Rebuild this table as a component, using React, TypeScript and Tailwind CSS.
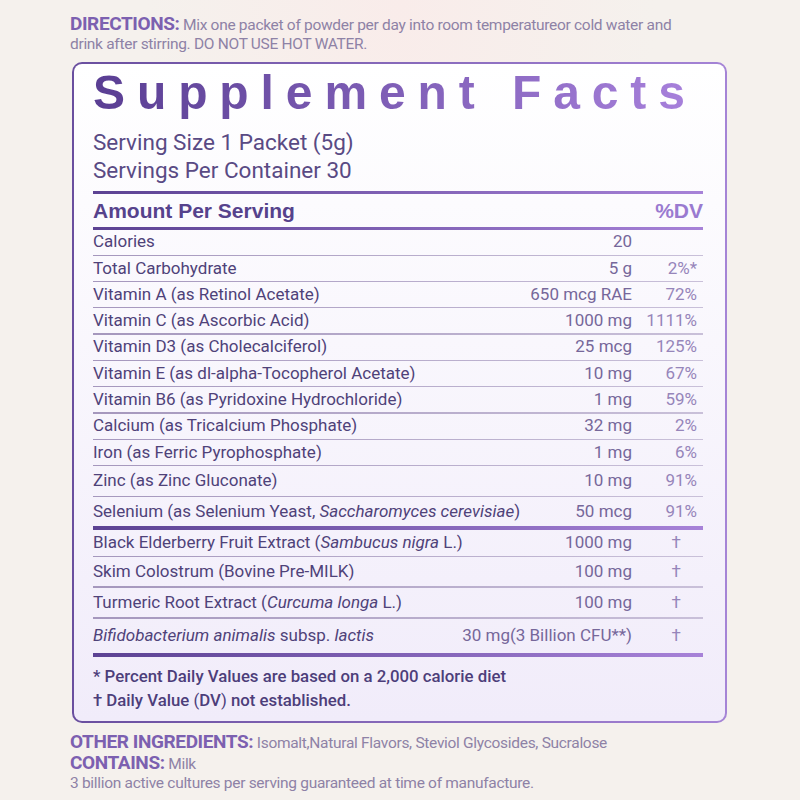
import React from "react";

type Row = { name: React.ReactNode; amt: React.ReactNode; dv: string; h: string };

const SMALL = "font-['Roboto',sans-serif] text-[15.5px] tracking-[-0.3px]";
const HEAD = "inline-block leading-[19px] font-bold text-[19px] tracking-[-0.4px] text-[#7c60b0]";

const rows1: Row[] = [
  { name: "Calories", amt: "20", dv: "", h: "h-[25px]" },
  { name: "Total Carbohydrate", amt: "5 g", dv: "2%*", h: "h-[25px]" },
  { name: "Vitamin A (as Retinol Acetate)", amt: "650 mcg RAE", dv: "72%", h: "h-[25px]" },
  { name: "Vitamin C (as Ascorbic Acid)", amt: "1000 mg", dv: "1111%", h: "h-[25px]" },
  { name: "Vitamin D3 (as Cholecalciferol)", amt: "25 mcg", dv: "125%", h: "h-[25px]" },
  { name: "Vitamin E (as dl-alpha-Tocopherol Acetate)", amt: "10 mg", dv: "67%", h: "h-[25px]" },
  { name: "Vitamin B6 (as Pyridoxine Hydrochloride)", amt: "1 mg", dv: "59%", h: "h-[25px]" },
  { name: "Calcium (as Tricalcium Phosphate)", amt: "32 mg", dv: "2%", h: "h-[25px]" },
  { name: "Iron (as Ferric Pyrophosphate)", amt: "1 mg", dv: "6%", h: "h-[25px]" },
  { name: "Zinc (as Zinc Gluconate)", amt: "10 mg", dv: "91%", h: "h-[29.5px]" },
];

const rows2: Row[] = [
  {
    name: (
      <>
        Black Elderberry Fruit Extract (<i>Sambucus nigra</i> L.)
      </>
    ),
    amt: "1000 mg",
    dv: "†",
    h: "h-[26px]",
  },
  { name: "Skim Colostrum (Bovine Pre-MILK)", amt: "100 mg", dv: "†", h: "h-[29.5px]" },
  {
    name: (
      <>
        Turmeric Root Extract (<i>Curcuma longa</i> L.)
      </>
    ),
    amt: "100 mg",
    dv: "†",
    h: "h-[29.7px]",
  },
];

function Thin() {
  return <div className="h-[1.3px] bg-linear-to-r from-[#a597bd] to-[#c9c0d9]" />;
}

function Thick({ h }: { h: string }) {
  return <div className={`${h} bg-linear-to-r from-[#5c4293] to-[#a782d8]`} />;
}

function RowView({ r }: { r: Row }) {
  return (
    <div className={`flex items-center ${r.h}`}>
      <div className="flex-1 text-[#4f4279]">{r.name}</div>
      <div className="text-right text-[#76679a]">{r.amt}</div>
      <div className={`w-[71px] text-right text-[#9685ba] ${r.dv === "†" ? "pr-[22px]" : "pr-[6px]"}`}>{r.dv}</div>
    </div>
  );
}

export default function App() {
  return (
    <div className="w-[800px] h-[800px] overflow-hidden bg-[#f5f1ed] bg-[radial-gradient(ellipse_at_50%_0%,#f9ecea_0%,transparent_45%)] pl-[70px] pt-[14px]">
      <div className={`${SMALL} leading-[19px] text-[#8e82a6]`}>
        <div>
          <span className={HEAD}>DIRECTIONS:</span> Mix one packet of powder per day into room temperatureor cold
          water and
        </div>
        <div>drink after stirring. DO NOT USE HOT WATER.</div>
      </div>

      <div className="mt-[8px] ml-[2px] w-[655px] h-[661px] rounded-[10px] p-[2px] bg-linear-to-r from-[#6a4f9f] to-[#a584d6]">
        <div className="h-full rounded-[8px] bg-linear-to-b from-[#ffffff] to-[#f1ecfa] pl-[19px] pr-[22px] pt-[5px] font-['Roboto',sans-serif]">
          <div className="h-[48px] leading-[48px] text-[48px] font-bold tracking-[11.9px] font-['Liberation_Sans',Arial,sans-serif] whitespace-nowrap">
            <span className="bg-linear-to-r from-[#5a3e93] to-[#a881dc] bg-clip-text text-transparent">
              Supplement Facts
            </span>
          </div>

          <div className="mt-[11px] text-[22.5px] leading-[28px] text-[#594a84]">
            <div>Serving Size 1 Packet (5g)</div>
            <div>Servings Per Container 30</div>
          </div>

          <div className="mt-[7px]">
            <Thick h="h-[3px]" />
          </div>

          <div className="flex h-[33px] items-center font-['Liberation_Sans',Arial,sans-serif] text-[21px] font-bold">
            <div className="flex-1 text-[#56428c]">Amount Per Serving</div>
            <div className="text-[#9a7ad0]">%DV</div>
          </div>
          <Thick h="h-[2.5px]" />

          <div className="text-[17px]">
            {rows1.map((r, i) => (
              <React.Fragment key={i}>
                <RowView r={r} />
                <Thin />
              </React.Fragment>
            ))}
            <RowView
              r={{
                name: (
                  <>
                    Selenium (as Selenium Yeast, <i>Saccharomyces cerevisiae</i>)
                  </>
                ),
                amt: "50 mcg",
                dv: "91%",
                h: "h-[28.7px]",
              }}
            />
            <Thick h="h-[4px]" />
            {rows2.map((r, i) => (
              <React.Fragment key={i}>
                <RowView r={r} />
                <Thin />
              </React.Fragment>
            ))}
            <RowView
              r={{
                name: (
                  <>
                    <i>Bifidobacterium animalis</i> subsp. <i>lactis</i>
                  </>
                ),
                amt: "30 mg(3 Billion CFU**)",
                dv: "†",
                h: "h-[34px]",
              }}
            />
            <Thick h="h-[4px]" />
          </div>

          <div className="mt-[7px] text-[16.8px] leading-[24px] font-medium text-[#4d3e7a]">
            <div>* Percent Daily Values are based on a 2,000 calorie diet</div>
            <div>
              † Daily Value <span className="font-normal">(</span>DV<span className="font-normal">)</span> not
              established.
            </div>
          </div>
        </div>
      </div>

      <div className={`${SMALL} mt-[9px] leading-[20px] text-[#8e82a6]`}>
        <div>
          <span className={HEAD}>OTHER INGREDIENTS:</span> Isomalt,Natural Flavors, Steviol Glycosides, Sucralose
        </div>
        <div>
          <span className={HEAD}>CONTAINS:</span> Milk
        </div>
        <div className="-mt-[1px]">3 billion active cultures per serving guaranteed at time of manufacture.</div>
      </div>
    </div>
  );
}
